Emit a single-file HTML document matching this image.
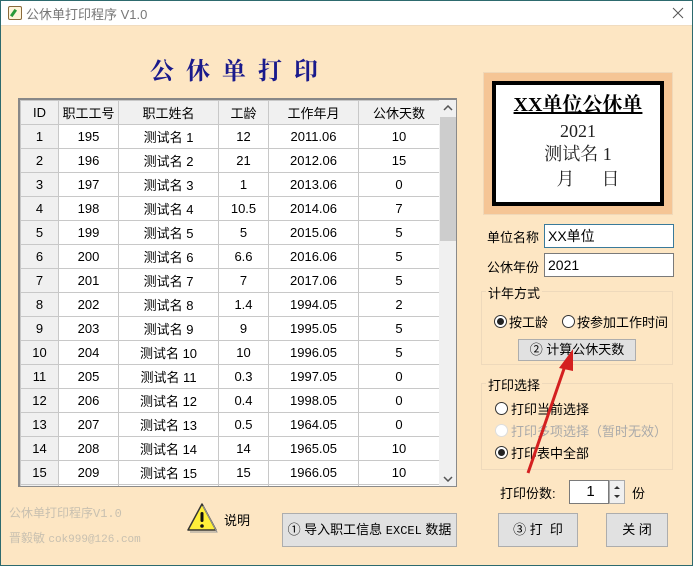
<!DOCTYPE html>
<html><head><meta charset="utf-8"><style>
*{margin:0;padding:0;box-sizing:border-box}
body{width:693px;height:566px;overflow:hidden;background:#fde6c3;font-family:"Liberation Sans","Noto Sans CJK SC",sans-serif;font-size:13px;color:#000;position:relative}
.a{position:absolute}
#tb{left:0;top:0;width:693px;height:26px;background:#fff;border-bottom:1px solid #f0dcc0}
#frame{left:0;top:0;width:693px;height:566px;border:1px solid #2d6a6e;pointer-events:none}
table{border-collapse:collapse;table-layout:fixed}
td{border:1px solid #c8c8c8;height:24px;text-align:center;font-size:13px;background:#fff;padding:0}
tr.h td{background:#f0f0f0}
td.id{background:#f0f0f0}
.btn{background:#e1e1e1;border:1px solid #adadad;text-align:center;font-size:13px}
.inp{background:#fff;border:1px solid #7a7a7a;padding-left:3px;font-size:14px}
.grp{border:1px solid #eed9bb}
.lg{background:#fde6c3;padding:0 2px;font-size:13px}
.rd{width:13px;height:13px;border:1px solid #333;border-radius:50%;background:#fff}
.rd.on::after{content:"";position:absolute;left:2px;top:2px;width:7px;height:7px;border-radius:50%;background:#222}
</style></head><body>
<div id="tb" class="a"></div>
<div class="a" style="left:8px;top:6px;width:14px;height:14px;border:1px solid #8a6a3a;background:#fff4da;border-radius:2px"></div>
<div class="a" style="left:12px;top:9px;width:3px;height:8px;background:#2a9a3a;transform:rotate(35deg)"></div>
<div class="a" style="left:26px;top:4px;font-size:13px;color:#777">公休单打印程序 V1.0</div>
<svg class="a" style="left:672px;top:7px" width="12" height="12"><path d="M1 1L11 11M11 1L1 11" stroke="#555" stroke-width="1"/></svg>

<div class="a" style="left:150px;top:51px;font-size:24px;font-weight:bold;color:#1a1a8c;letter-spacing:12px;font-family:'Noto Serif CJK SC','Noto Sans CJK SC',serif">公休单打印</div>

<div class="a" style="left:18px;top:98px;width:439px;height:389px;border:1px solid #8a8a8a;border-top:2px solid #888;border-left:2px solid #888;background:#fff;overflow:hidden">
<table style="width:419px">
<colgroup><col style="width:38px"><col style="width:60px"><col style="width:100px"><col style="width:50px"><col style="width:90px"><col style="width:81px"></colgroup>
<tr class="h"><td>ID</td><td>职工工号</td><td>职工姓名</td><td>工龄</td><td>工作年月</td><td>公休天数</td></tr>
<tr><td class="id">1</td><td>195</td><td>测试名 1</td><td>12</td><td>2011.06</td><td>10</td></tr>
<tr><td class="id">2</td><td>196</td><td>测试名 2</td><td>21</td><td>2012.06</td><td>15</td></tr>
<tr><td class="id">3</td><td>197</td><td>测试名 3</td><td>1</td><td>2013.06</td><td>0</td></tr>
<tr><td class="id">4</td><td>198</td><td>测试名 4</td><td>10.5</td><td>2014.06</td><td>7</td></tr>
<tr><td class="id">5</td><td>199</td><td>测试名 5</td><td>5</td><td>2015.06</td><td>5</td></tr>
<tr><td class="id">6</td><td>200</td><td>测试名 6</td><td>6.6</td><td>2016.06</td><td>5</td></tr>
<tr><td class="id">7</td><td>201</td><td>测试名 7</td><td>7</td><td>2017.06</td><td>5</td></tr>
<tr><td class="id">8</td><td>202</td><td>测试名 8</td><td>1.4</td><td>1994.05</td><td>2</td></tr>
<tr><td class="id">9</td><td>203</td><td>测试名 9</td><td>9</td><td>1995.05</td><td>5</td></tr>
<tr><td class="id">10</td><td>204</td><td>测试名 10</td><td>10</td><td>1996.05</td><td>5</td></tr>
<tr><td class="id">11</td><td>205</td><td>测试名 11</td><td>0.3</td><td>1997.05</td><td>0</td></tr>
<tr><td class="id">12</td><td>206</td><td>测试名 12</td><td>0.4</td><td>1998.05</td><td>0</td></tr>
<tr><td class="id">13</td><td>207</td><td>测试名 13</td><td>0.5</td><td>1964.05</td><td>0</td></tr>
<tr><td class="id">14</td><td>208</td><td>测试名 14</td><td>14</td><td>1965.05</td><td>10</td></tr>
<tr><td class="id">15</td><td>209</td><td>测试名 15</td><td>15</td><td>1966.05</td><td>10</td></tr>
<tr><td class="id">16</td><td>210</td><td>测试名 16</td><td>16</td><td>1967.05</td><td>10</td></tr>
</table>
<div class="a" style="left:419px;top:0;width:18px;height:387px;background:#f0f0f0"></div>
<div class="a" style="left:420px;top:17px;width:16px;height:124px;background:#cdcdcd"></div>
<svg class="a" style="left:423px;top:5px" width="10" height="6"><path d="M1 5L5 1L9 5" stroke="#555" fill="none" stroke-width="1.5"/></svg>
<svg class="a" style="left:423px;top:376px" width="10" height="6"><path d="M1 1L5 5L9 1" stroke="#555" fill="none" stroke-width="1.5"/></svg>
</div>

<!-- preview -->
<div class="a" style="left:483px;top:72px;width:190px;height:143px;background:#f5c595;border:1px solid #f0d8b8"></div>
<div class="a" style="left:492px;top:81px;width:172px;height:125px;background:#fff;border:4px solid #000;text-align:center;font-family:'Liberation Serif','Noto Serif CJK SC',serif;color:#222">
<div style="font-size:20px;font-weight:bold;text-decoration:underline;margin-top:7px;line-height:26px;color:#000">XX单位公休单</div>
<div style="font-size:18px;line-height:24px;margin-top:1px">2021</div>
<div style="font-size:18px;line-height:23px">测试名 1</div>
<div style="font-size:18px;line-height:26px;padding-left:20px">月&nbsp;&nbsp;&nbsp;&nbsp;&nbsp;&nbsp;日</div>
</div>

<div class="a" style="left:487px;top:227px">单位名称</div>
<div class="a inp" style="left:544px;top:224px;width:130px;height:24px;border-color:#3a7a9a;line-height:22px">XX单位</div>
<div class="a" style="left:487px;top:257px">公休年份</div>
<div class="a inp" style="left:544px;top:253px;width:130px;height:24px;line-height:22px">2021</div>

<div class="a grp" style="left:481px;top:291px;width:192px;height:74px"></div>
<div class="a lg" style="left:486px;top:283px">计年方式</div>
<div class="a rd on" style="left:494px;top:315px"></div>
<div class="a" style="left:509px;top:312px">按工龄</div>
<div class="a rd" style="left:562px;top:315px"></div>
<div class="a" style="left:577px;top:312px">按参加工作时间</div>
<div class="a btn" style="left:518px;top:339px;width:118px;height:22px;line-height:20px">② 计算公休天数</div>

<div class="a grp" style="left:481px;top:383px;width:192px;height:87px"></div>
<div class="a lg" style="left:486px;top:375px">打印选择</div>
<div class="a rd" style="left:495px;top:402px"></div>
<div class="a" style="left:511px;top:399px">打印当前选择</div>
<div class="a rd" style="left:495px;top:424px;border-color:#ddd"></div>
<div class="a" style="left:511px;top:421px;color:#aaa">打印多项选择（暂时无效）</div>
<div class="a rd on" style="left:495px;top:446px"></div>
<div class="a" style="left:511px;top:443px">打印表中全部</div>

<div class="a" style="left:500px;top:483px">打印份数:</div>
<div class="a inp" style="left:569px;top:480px;width:40px;height:24px;text-align:center;font-size:15px;line-height:22px">1</div>
<div class="a" style="left:609px;top:480px;width:16px;height:24px;background:#f0f0f0;border:1px solid #aaa"></div>
<svg class="a" style="left:612px;top:484px" width="10" height="16"><path d="M2 5L5 2L8 5Z M2 11L5 14L8 11Z" fill="#333"/></svg>
<div class="a" style="left:632px;top:483px">份</div>

<div class="a btn" style="left:282px;top:513px;width:175px;height:34px;line-height:32px">① 导入职工信息 <span style="font-family:'Liberation Mono',monospace;font-size:12px">EXCEL</span> 数据</div>
<div class="a btn" style="left:498px;top:513px;width:80px;height:34px;line-height:32px">③ 打&nbsp;&nbsp;印</div>
<div class="a btn" style="left:606px;top:513px;width:62px;height:34px;line-height:32px">关&nbsp;闭</div>

<div class="a" style="left:9px;top:504px;color:#c8c0b0;font-size:12px">公休单打印程序<span style="font-family:'Liberation Mono',monospace">V1.0</span></div>
<div class="a" style="left:9px;top:529px;color:#c8c0b0;font-size:12px">晋毅敏 <span style="font-family:'Liberation Mono',monospace;font-size:11px">cok999@126.com</span></div>

<svg class="a" style="left:186px;top:502px" width="32" height="32"><path d="M16 2L30 28H2Z" fill="#ffef3a" stroke="#333" stroke-width="1.5" stroke-linejoin="round"/><path d="M17 4L31 30H4" fill="none" stroke="#999" stroke-width="1"/><rect x="14.5" y="10" width="3" height="10" rx="1.5" fill="#111"/><circle cx="16" cy="24" r="1.8" fill="#111"/></svg>
<div class="a" style="left:224px;top:510px">说明</div>

<svg class="a" style="left:0;top:0" width="693" height="566"><path d="M528 473L566 363" stroke="#d42020" stroke-width="3"/><path d="M573 349L559 368L573 371Z" fill="#d42020"/></svg>
<div id="frame" class="a"></div>
</body></html>
